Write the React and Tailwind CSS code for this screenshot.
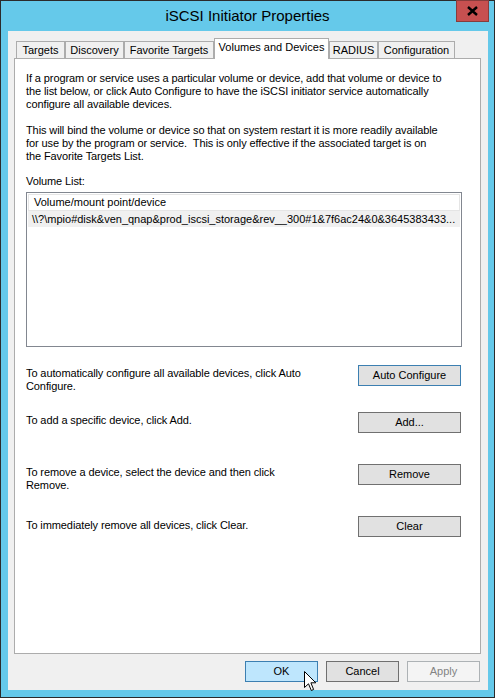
import React from "react";

function Tab({ label, w, selected }) {
  if (selected) {
    return (
      <div
        className="relative z-10 h-[21px] -mb-px bg-white border border-b-0 border-[#acacac] flex justify-center pt-[2px]"
        style={{ width: w }}
      >
        <span>{label}</span>
      </div>
    );
  }
  return (
    <div
      className="h-[17px] bg-[#f0f0f0] border border-b-0 border-[#acacac] flex items-center justify-center"
      style={{ width: w }}
    >
      <span>{label}</span>
    </div>
  );
}

function Btn({ children, variant = "normal", className = "" }) {
  const styles = {
    normal: "bg-[#e1e1e1] border-[#707070] text-black",
    def: "bg-[#e1e1e1] border-[#3c7fb1] text-black",
    hover: "bg-[#bee6fd] border-[#3c7fb1] text-black",
    disabled: "bg-[#f4f4f4] border-[#adb2b5] text-[#838383]",
  };
  return (
    <div
      className={
        "h-[21px] border flex items-center justify-center shrink-0 " +
        styles[variant] +
        " " +
        className
      }
    >
      {children}
    </div>
  );
}

export default function App() {
  return (
    <div className="relative w-[495px] h-[698px] bg-[#65c9ea] border border-[#2b2b2b] flex flex-col font-['Liberation_Sans',Arial,sans-serif] text-[11px] leading-[13px] text-black select-none">
      {/* Title bar */}
      <div className="h-[30px] flex items-center justify-center shrink-0">
        <span className="text-[15px] leading-[18px] text-black">
          iSCSI Initiator Properties
        </span>
      </div>
      <div className="absolute top-[-1px] right-[5px] w-[33px] h-[22px] bg-[#c75050] border border-[#873c3c] flex items-center justify-center">
        <svg width="11" height="10" viewBox="0 0 11 10">
          <path d="M1 1 L10 9 M10 1 L1 9" stroke="#000" strokeWidth="2.4" />
        </svg>
      </div>

      {/* Body */}
      <div className="ml-[7px] w-[480px] h-[659px] bg-[#f0f0f0] flex flex-col pl-[6px] pr-[7px] pt-[7px]">
        {/* Tabs */}
        <div className="h-[20px] flex items-end pl-[2px] shrink-0">
          <Tab label="Targets" w={49} />
          <Tab label="Discovery" w={59} />
          <Tab label="Favorite Targets" w={90} />
          <Tab label="Volumes and Devices" w={115} selected />
          <Tab label="RADIUS" w={49} />
          <Tab label="Configuration" w={77} />
        </div>

        {/* Panel */}
        <div className="h-[596px] w-[467px] bg-white border border-[#acacac] flex flex-col pl-[11px] pt-[13px] shrink-0 tracking-[-0.1px]">
          <p>
            If a program or service uses a particular volume or device, add that volume or device to
            <br />
            the list below, or click Auto Configure to have the iSCSI initiator service automatically
            <br />
            configure all available devices.
          </p>
          <p className="mt-[13px]">
            This will bind the volume or device so that on system restart it is more readily available
            <br />
            for use by the program or service.&nbsp; This is only effective if the associated target is on
            <br />
            the Favorite Targets List.
          </p>
          <p className="mt-[12px]">Volume List:</p>

          {/* List */}
          <div className="mt-[4px] w-[436px] h-[155px] border border-[#828790] p-px bg-white shrink-0 tracking-normal">
            <div className="h-[17px] border border-[#e5e5e5] flex items-center pl-[5px]">
              Volume/mount point/device
            </div>
            <div className="h-[16px] bg-[#f0f0f0] flex items-center pl-[4px] pr-[2px] whitespace-nowrap overflow-hidden">
              \\?\mpio#disk&amp;ven_qnap&amp;prod_iscsi_storage&amp;rev__300#1&amp;7f6ac24&amp;0&amp;3645383433...
            </div>
          </div>

          {/* Action rows */}
          <div className="mt-[18px] flex flex-col pr-[19px]">
            <div className="h-[47px] flex justify-between items-start">
              <p className="mt-[2px]">
                To automatically configure all available devices, click Auto
                <br />
                Configure.
              </p>
              <Btn variant="def" className="w-[103px] tracking-normal">Auto Configure</Btn>
            </div>
            <div className="h-[52px] flex justify-between items-start">
              <p className="mt-[2px]">To add a specific device, click Add.</p>
              <Btn className="w-[103px] tracking-normal">Add...</Btn>
            </div>
            <div className="h-[52px] flex justify-between items-start">
              <p className="mt-[2px]">
                To remove a device, select the device and then click
                <br />
                Remove.
              </p>
              <Btn className="w-[103px] tracking-normal">Remove</Btn>
            </div>
            <div className="h-[22px] flex justify-between items-start">
              <p className="mt-[3px]">To immediately remove all devices, click Clear.</p>
              <Btn className="w-[103px] tracking-normal">Clear</Btn>
            </div>
          </div>
        </div>

        {/* Bottom buttons */}
        <div className="mt-[7px] flex justify-end gap-[8px] pr-px shrink-0">
          <Btn variant="hover" className="w-[73px]">OK</Btn>
          <Btn className="w-[73px]">Cancel</Btn>
          <Btn variant="disabled" className="w-[73px]">Apply</Btn>
        </div>
      </div>

      {/* Mouse cursor */}
      <svg
        className="absolute left-[303px] top-[670px]"
        width="13"
        height="21"
        viewBox="0 0 13 21"
      >
        <path
          d="M0.5 0.5 L0.5 16.5 L4.5 12.8 L7.3 19.5 L9.6 18.5 L6.9 11.8 L11.8 11.8 Z"
          fill="#fff"
          stroke="#000"
          strokeWidth="1"
          strokeLinejoin="miter"
        />
      </svg>
    </div>
  );
}
